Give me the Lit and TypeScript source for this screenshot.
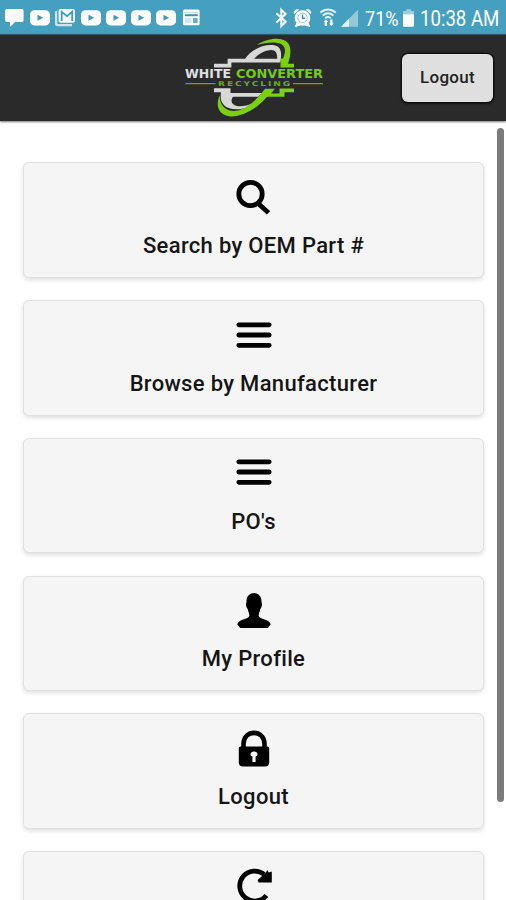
import { LitElement, html, svg, css } from "lit";
import { customElement, property } from "lit/decorators.js";

const ICONS: Record<string, unknown> = {
  search: svg`<circle cx="16.5" cy="16" r="11.7" fill="none" stroke="#000" stroke-width="4.8"/><path d="M25.4 23.2L36.2 33.2L32.9 36.6L22 26.8Z"/>`,
  menu: svg`<path d="M4.8 8.8H35.2M4.8 19H35.2M4.8 29.3H35.2" stroke="#000" stroke-width="4.8" stroke-linecap="round"/>`,
  person: svg`<path d="M20 2C15.2 2 12.6 5.6 12.5 10.3C12.5 12 11.8 12.4 12 13.8C12.2 15.7 12.8 17.3 13.8 18.2C14.3 21 15.2 22.2 15.4 24.4C15.4 28.3 5 27.6 3.2 33.2L6.3 37H33.7L36.8 33.2C35 27.6 24.6 28.3 24.6 24.4C24.8 22.2 25.8 21 26.2 18.2C27.2 17.3 27.8 15.7 28 13.8C28.2 12.4 27.5 12 27.5 10.3C27.4 5.6 24.8 2 20 2Z"/>`,
  lock: svg`<path d="M9.5 20V15C9.5 .2 30.5 .2 30.5 15V20" fill="none" stroke="#000" stroke-width="4.6"/><path fill-rule="evenodd" d="M6.5 17.5H33.5Q35.2 17.5 35.2 19.5V33.3Q35.2 37.5 31 37.5H9Q4.8 37.5 4.8 33.3V19.5Q4.8 17.5 6.5 17.5ZM20 22.4C18 22.4 16.5 23.6 16.5 25.2C16.5 26.6 17.2 27.2 18.4 27.4V33H21.6V27.4C22.8 27.2 23.5 26.6 23.5 25.2C23.5 23.6 22 22.4 20 22.4Z"/>`,
  refresh: svg`<path d="M32.4 28.5A15 15 0 1 1 30.2 7.4" fill="none" stroke="#000" stroke-width="4.8"/><path d="M23.6 13L31.5 6L33.5 3L34.6 5.4L37.8 4.4V15.4H24.6Z"/>`,
};

@customElement("menu-card")
class MenuCard extends LitElement {
  @property() icon = "";
  @property() label = "";
  static styles = css`
    :host { display: block; height: 115.5px; flex: none; box-sizing: border-box; border: 1.5px solid #e0e0e0; border-radius: 6px;
      background: #f5f5f5; box-shadow: 0 2px 4px rgba(0,0,0,.13); text-align: center; }
    .icon { display: block; width: 40px; height: 40px; margin: 14.5px auto 0; overflow: visible; }
    .label { font: 500 22px/30px Roboto, sans-serif; letter-spacing: .32px; color: #151515; margin-top: 13.2px; white-space: nowrap; }
  `;
  render() {
    return html`<svg class="icon" viewBox="0 0 40 40">${ICONS[this.icon]}</svg>${this.label ? html`<div class="label">${this.label}</div>` : ""}`;
  }
}

const video = () => html`<svg class="s" width="20" height="20" viewBox="0 0 20 20"><rect y="2.2" width="20" height="15.2" rx="4.5" fill="#fff"/><path d="M7.5 6.8L13.2 9.8L7.5 12.8Z" fill="#4199b7"/></svg>`;

@customElement("app-root")
class AppRoot extends LitElement {
  static styles = css`
    :host { display: flex; flex-direction: column; position: relative; width: 506px; height: 900px; overflow: hidden; background: #fff; font-family: Roboto, sans-serif; }
    .status { flex: none; height: 34px; box-sizing: border-box; padding: 0 6px 0 5px; background: #45a0bf; display: flex; align-items: center; color: #fff; }
    .left { display: flex; gap: 5.2px; align-items: center; padding-top: 2px; }
    .s { display: block; flex: none; }
    .right { display: flex; align-items: center; margin-left: auto; }
    .pct { font-size: 21px; line-height: 34px; width: 34px; margin: 3px 4px 0 5px; transform: scaleX(.86); transform-origin: left; white-space: nowrap; }
    .time { font-size: 21.5px; line-height: 34px; width: 80px; margin: 3px 0 0 5px; transform: scaleX(.865); transform-origin: left; white-space: nowrap; }
    .header { flex: none; height: 87px; box-sizing: border-box; border-top: 1px solid #28586a; background: #2a2a2a; display: grid; grid-template-columns: 176px 156px 1fr; box-shadow: 0 1px 2px rgba(0,0,0,.55); }
    .logo { display: block; margin-top: -1px; }
    .btn { width: 91px; height: 48px; box-sizing: border-box; justify-self: end; margin: 18.5px 13.5px 0 0; border: 0; border-radius: 6px; background: #dfdfdf; box-shadow: 0 0 0 1.5px #111, 0 1px 3px #000; font: 500 17px/47px Roboto, sans-serif; letter-spacing: .3px; color: #222; padding: 0 0 1px 1px; }
    .body { flex: 1; padding: 41.3px 22px 0 23px; display: flex; flex-direction: column; gap: 22.3px; }
    .thumb { position: absolute; right: 2px; top: 128px; width: 7px; height: 674px; border-radius: 4px; background: #7b7b7b; }
  `;
  render() {
    return html`
      <div class="status">
        <div class="left">
          <svg class="s" width="20" height="20" viewBox="0 0 20 20"><path d="M2 1H17Q18.6 1 18.6 3V12Q18.6 14 17 14H10L5 19V14H2Q0 14 0 12V3Q0 1 2 1Z" fill="#fff"/></svg>
          ${video()}
          <svg class="s" width="20" height="20" viewBox="0 0 20 20"><path d="M0 3V16Q0 18.2 2.4 18.2H17V16H3.2Q2.2 16 2.2 15V3Z" fill="#c9e4ed"/><rect x="3.6" y="1" width="16.4" height="13.8" rx="2" fill="#f4fafc"/><path d="M6.7 13V3.8L12 8.2L17.2 3.8V13" fill="none" stroke="#4199b7" stroke-width="1.8"/></svg>
          ${video()}${video()}${video()}${video()}
          <svg class="s" width="20" height="20" viewBox="0 0 20 20"><rect x="2" y="1.6" width="16.6" height="15.6" rx="1.5" fill="#fff"/><path d="M3.2 4.6H17.2" stroke="#b5d9e5" stroke-width="1"/><path d="M4 7.2H16.8" stroke="#3f93b0" stroke-width="2"/><rect x="4" y="10" width="6.5" height="5" fill="#d3e9f0"/><rect x="12" y="10" width="4.6" height="5" fill="#66adc6"/></svg>
        </div>
        <div class="right">
          <svg class="s" width="88" height="34" viewBox="271 0 88 34">
            <path d="M275.3 13.3L284.6 21.7L280.3 26V9.8L284.6 14L275.3 22.5" fill="none" stroke="#fff" stroke-width="2"/>
            <circle cx="301.5" cy="18" r="7.8" fill="#fff"/><path d="M293.2 13.4Q293 9.2 297.6 9.8ZM309.8 13.4Q310 9.2 305.4 9.8ZM296 23L294.2 26.6L299 25ZM307 23L308.8 26.6L304 25Z" fill="#fff" stroke="#fff"/><circle cx="301.5" cy="17.8" r="4.7" fill="#fff" stroke="#8bc4d6"/><path d="M301.5 14.6V18.2H304.2" fill="none" stroke="#348fad" stroke-width="1.4"/>
            <path d="M319.3 12.5Q327 6.5 334.8 12.5M321.7 15.4Q327 11.2 332.4 15.4M324.2 18.2Q327 16 329.8 18.2" fill="none" stroke="#e5f3f7" stroke-width="1.9"/><path d="M322.6 22L325 19.5L327.2 22H326V26H323.7V22ZM328 23.4H329.2V19.5H331.5V23.4H332.6L330.4 26Z" fill="#fff"/>
            <path d="M340 26.8L357 9.7V26.8Z" fill="#95c9da"/><path d="M340 26.8L348 18.8V26.8Z" fill="#e2f2f6"/>
          </svg>
          <span class="pct">71%</span>
          <svg class="s" width="12" height="34" viewBox="403 0 12 34"><path d="M406.2 9.2H411.2V11H414V14.4H403V11H406.2Z" fill="#9bcddd"/><path d="M403 14.2H414V25.2Q414 26.8 412.4 26.8H404.6Q403 26.8 403 25.2Z" fill="#fff"/></svg>
          <span class="time">10:38 AM</span>
        </div>
      </div>
      <div class="header">
        <span></span>
        <svg class="logo" width="156" height="88" viewBox="0 0 156 88">
          <path d="M69 25C75 15.5 88 10 98 11.3C105 12.3 106 18 104.5 28H101C101.5 22 101.5 16.5 95.5 16C89 16 82 20 78 25Z" fill="#d8d8d8"/>
          <path d="M81 11C90 4.5 106 2 112 9C116 14.5 114.5 22 112 29.8H118V33.5H104.5V24.4H107C110.5 17 109.5 12 104 9.6C98 7.3 89 8.7 81 11Z" fill="#7bd014"/>
          <path d="M38 31.6H53.5V26.7H104" fill="none" stroke="#d8d8d8" stroke-width="3.8"/>
          <path d="M38 54.3H54.5V59H86L82 62.8H57C53.5 67 56.5 72.5 64 72.3C68 72.2 73 71 77 69.5C73 73 66 75.6 60 75.3C47 75 43.5 67.5 45 58.3H38Z" fill="#d8d8d8"/>
          <path d="M118 54.5V58.2H108.5V62.8H91C83 73 66 84 53 82.3C41.5 80.6 39.5 70 43.8 61.5C43.8 70 48 76.4 57 77C68 77.5 80 67 89 54.8H99L95 59.4H103.5V54.5Z" fill="#7bd014"/>
          <text x="9" y="44" textLength="46" lengthAdjust="spacingAndGlyphs" font-family="DejaVu Sans, sans-serif" font-weight="bold" font-size="11.6" fill="#e0e0e0">WHITE</text>
          <text x="60" y="44" textLength="87" lengthAdjust="spacingAndGlyphs" font-family="DejaVu Sans, sans-serif" font-weight="bold" font-size="11.6" fill="#76cb16">CONVERTER</text>
          <path d="M9.5 49.7H39.5M117 49.7H147" stroke="#66a71e" stroke-width="1.3"/>
          <text x="42" y="52.2" textLength="74" lengthAdjust="spacingAndGlyphs" letter-spacing="1.4" font-family="DejaVu Sans, sans-serif" font-weight="bold" font-size="6.6" fill="#66ad19">RECYCLING</text>
        </svg>
        <button class="btn">Logout</button>
      </div>
      <div class="body">
        <menu-card icon="search" label="Search by OEM Part #"></menu-card>
        <menu-card icon="menu" label="Browse by Manufacturer"></menu-card>
        <menu-card icon="menu" label="PO's"></menu-card>
        <menu-card icon="person" label="My Profile"></menu-card>
        <menu-card icon="lock" label="Logout"></menu-card>
        <menu-card icon="refresh"></menu-card>
      </div>
      <div class="thumb"></div>
    `;
  }
}
